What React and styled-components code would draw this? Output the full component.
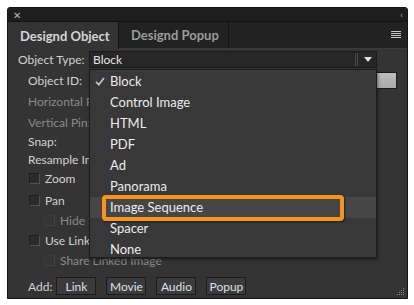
import styled, { createGlobalStyle } from "styled-components";

const Global = createGlobalStyle`
  body {
    margin: 0;
    padding: 7px;
    background: #ffffff;
    font-family: "Lato", "Open Sans", sans-serif;
  }
`;

const Panel = styled.div`
  width: 401px;
  height: 292px;
  box-sizing: border-box;
  background: #343434;
  border: 1px solid #141414;
  border-radius: 3px 3px 0 0;
  display: flex;
  flex-direction: column;
  position: relative;
  overflow: hidden;
`;

const TitleBar = styled.div`
  height: 13px;
  background: #1e1e1e;
  display: flex;
  align-items: center;
  justify-content: space-between;
  padding: 0 6px 0 5px;
  color: #b4b4b4;
  font-size: 10px;
  border-bottom: 1px solid #121212;
`;

const Collapse = styled.span`
  color: #7a7a7a;
  font-size: 9px;
  letter-spacing: -2px;
`;

const TabBar = styled.div`
  height: 27px;
  display: flex;
  background: #222222;
`;

const Tab = styled.div`
  width: ${(p) => p.w}px;
  box-sizing: border-box;
  display: flex;
  align-items: center;
  padding-left: ${(p) => p.pad}px;
  font-size: 13px;
  font-weight: 700;
  color: ${(p) => (p.active ? "#d6d6d6" : "#9b9b9b")};
  background: ${(p) => (p.active ? "#343434" : "#222222")};
  border-right: 1px solid #141414;
  border-bottom: ${(p) => (p.active ? "none" : "1px solid #3c3c3c")};
`;

const TabRest = styled.div`
  flex: 1;
  display: flex;
  align-items: center;
  justify-content: flex-end;
  padding-right: 6px;
  border-bottom: 1px solid #3c3c3c;
`;

const Body = styled.div`
  flex: 1;
  display: flex;
  flex-direction: column;
  padding: 1px 10px 0 10px;
`;

const Row = styled.div`
  height: ${(p) => p.h}px;
  display: flex;
  align-items: center;
  padding-left: ${(p) => p.indent || 0}px;
  position: relative;
`;

// labels partly hidden under the open menu are cut at its left edge
const Label = styled.span`
  width: ${(p) => (p.w ? `${p.w}px` : "auto")};
  max-width: ${(p) => (p.clip ? `${p.clip}px` : "none")};
  overflow: hidden;
  flex-shrink: 0;
  font-size: 12px;
  color: ${(p) => (p.dim ? "#8a8a8a" : "#d2d2d2")};
  white-space: nowrap;
`;

const SelectWrap = styled.div`
  position: relative;
  flex: 1;
  margin-right: 20px;
  z-index: 2;
`;

const Select = styled.div`
  height: 17px;
  box-sizing: border-box;
  background: #262626;
  border: 1px solid #1a1a1a;
  display: flex;
  align-items: center;
  padding-left: 3px;
  font-size: 12px;
  color: #e4e4e4;
`;

const SelectValue = styled.span`
  flex: 1;
`;

const Divider = styled.span`
  width: 3px;
  height: 13px;
  border-left: 1px solid #474747;
  border-right: 1px solid #474747;
  box-sizing: border-box;
  margin-right: 6px;
`;

const Arrow = styled.span`
  width: 0;
  height: 0;
  border-left: 4px solid transparent;
  border-right: 4px solid transparent;
  border-top: 5px solid #e0e0e0;
  margin-right: 4px;
`;

const Menu = styled.div`
  position: absolute;
  top: 18px;
  left: 0;
  right: 0;
  height: 189px;
  box-sizing: border-box;
  background: #383838;
  border: 1px solid #1c1c1c;
  box-shadow: 1px 2px 3px rgba(0, 0, 0, 0.45);
  padding-top: 1px;
`;

const Item = styled.div`
  position: relative;
  height: 21px;
  line-height: 21px;
  padding-left: 20px;
  font-size: 13px;
  color: #ececec;
  background: ${(p) => (p.hot ? "#464646" : "transparent")};
`;

const Check = styled.svg`
  position: absolute;
  left: 5px;
  top: 6px;
`;

const Callout = styled.div`
  position: absolute;
  left: 12px;
  right: 32px;
  top: -2px;
  bottom: -3px;
  border: 4px solid #f7941d;
  border-radius: 4px;
  box-shadow: 1px 1px 2px rgba(0, 0, 0, 0.5);
  pointer-events: none;
`;

const IdField = styled.div`
  flex: 1;
  height: 17px;
  box-sizing: border-box;
  background: linear-gradient(#bdbdbd, #a9a9a9);
  border: 1px solid #1a1a1a;
`;

const Box = styled.span`
  width: 11px;
  height: 11px;
  box-sizing: border-box;
  flex-shrink: 0;
  margin-right: 5px;
  background: ${(p) => (p.dim ? "#353535" : "#2b2b2b")};
  border: 1px solid ${(p) => (p.dim ? "#424242" : "#515151")};
  border-top-color: ${(p) => (p.dim ? "#3a3a3a" : "#1e1e1e")};
  border-left-color: ${(p) => (p.dim ? "#3a3a3a" : "#1e1e1e")};
`;

const AddRow = styled.div`
  display: flex;
  align-items: center;
  gap: 10px;
  padding: 8px 0 0 10px;
`;

const AddLabel = styled.span`
  font-size: 12px;
  color: #d2d2d2;
  margin-right: -6px;
`;

const Button = styled.div`
  width: 40px;
  height: 18px;
  box-sizing: border-box;
  display: flex;
  align-items: center;
  justify-content: center;
  background: #3b3b3b;
  border: 1px solid #1b1b1b;
  font-size: 12px;
  color: #d9e1ea;
`;

const Grip = styled.svg`
  position: absolute;
  right: 2px;
  bottom: 2px;
`;

const TYPES = [
  "Block",
  "Control Image",
  "HTML",
  "PDF",
  "Ad",
  "Panorama",
  "Image Sequence",
  "Spacer",
  "None",
];

const Hamburger = () => (
  <svg width="10" height="8" viewBox="0 0 10 8">
    {[0, 2, 4, 6].map((y) => (
      <rect key={y} x="0" y={y} width="10" height="1" fill="#c8c8c8" />
    ))}
  </svg>
);

const GripDots = () => {
  const dots = [];
  for (let r = 0; r < 4; r++) {
    for (let c = 3 - r; c < 4; c++) {
      dots.push(<rect key={`${r}-${c}`} x={c * 2} y={r * 2} width="1" height="1" fill="#8a8a8a" />);
    }
  }
  return (
    <Grip width="8" height="8" viewBox="0 0 8 8">
      {dots}
    </Grip>
  );
};

export default function App() {
  return (
    <>
      <Global />
      <Panel>
        <TitleBar>
          <span>✕</span>
          <Collapse>‹‹</Collapse>
        </TitleBar>
        <TabBar>
          <Tab active w={111} pad={12}>Designd Object</Tab>
          <Tab w={110} pad={12}>Designd Popup</Tab>
          <TabRest>
            <Hamburger />
          </TabRest>
        </TabBar>
        <Body>
          <Row h={19}>
            <Label w={71}>Object Type:</Label>
            <SelectWrap>
              <Select>
                <SelectValue>Block</SelectValue>
                <Divider />
                <Arrow />
              </Select>
              <Menu>
                {TYPES.map((t, i) => (
                  <Item key={t} hot={t === "Image Sequence"}>
                    {i === 0 && (
                      <Check width="10" height="9" viewBox="0 0 10 9">
                        <path d="M1 4.8 L3.8 7.6 L9 1" stroke="#c4c4c4" strokeWidth="1.7" fill="none" />
                      </Check>
                    )}
                    {t}
                    {t === "Image Sequence" && <Callout />}
                  </Item>
                ))}
              </Menu>
            </SelectWrap>
          </Row>
          <Row h={22} indent={10}>
            <Label w={61}>Object ID:</Label>
            <IdField />
          </Row>
          <Row h={21} indent={10}>
            <Label dim clip={61}>Horizontal Pin:</Label>
          </Row>
          <Row h={21} indent={10}>
            <Label dim clip={61}>Vertical Pin:</Label>
          </Row>
          <Row h={17} indent={10}>
            <Label>Snap:</Label>
          </Row>
          <Row h={18} indent={10}>
            <Label clip={61}>Resample Image:</Label>
          </Row>
          <Row h={21} indent={11}>
            <Box />
            <Label>Zoom</Label>
          </Row>
          <Row h={22} indent={11}>
            <Box />
            <Label>Pan</Label>
          </Row>
          <Row h={18} indent={26}>
            <Box dim />
            <Label dim clip={29}>Hide Scrollbars</Label>
          </Row>
          <Row h={22} indent={11}>
            <Box />
            <Label clip={44}>Use Linked Image</Label>
          </Row>
          <Row h={18} indent={26}>
            <Box dim />
            <Label dim>Share Linked Image</Label>
          </Row>
          <AddRow>
            <AddLabel>Add:</AddLabel>
            <Button>Link</Button>
            <Button>Movie</Button>
            <Button>Audio</Button>
            <Button>Popup</Button>
          </AddRow>
        </Body>
        <GripDots />
      </Panel>
    </>
  );
}
